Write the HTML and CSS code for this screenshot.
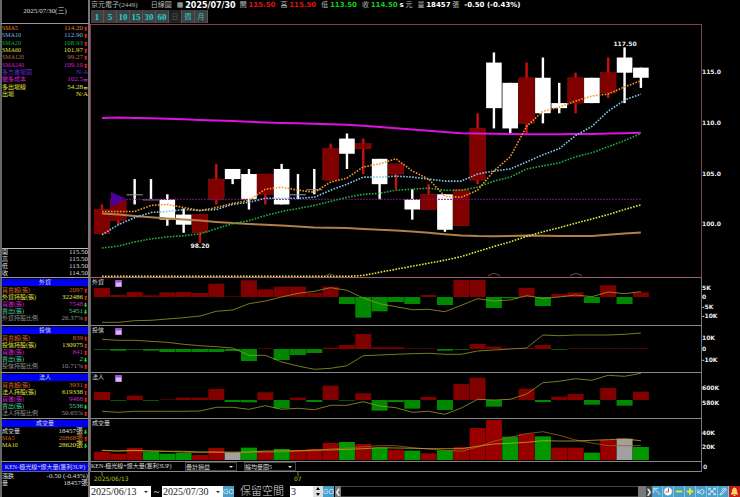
FILE: index.html
```html
<!DOCTYPE html>
<html lang="zh-Hant">
<head>
    <meta charset="UTF-8">
    <meta name="viewport" content="width=device-width, initial-scale=1.0">
    <title>京元電子(2449) 日線圖</title>
    <link rel="stylesheet" href="styles.css">
</head>
<body>

<div class="app">

    <div class="side top-date">2025/07/30(三)</div>
    <header class="head">
        <div class="quote">
            <span class="name">京元電子(2449)</span>
            <span class="kind">日線圖</span>
            <span class="box">▦</span>
            <b class="day">2025/07/30</b>
            <span class="f">開 <b class="up">115.50</b></span>
            <span class="f">高 <b class="up">115.50</b></span>
            <span class="f">低 <b class="down">113.50</b></span>
            <span class="f">收 <b class="down">114.50</b> <b>s</b> 元</span>
            <span class="f">量 <b>18457</b> 張</span>
            <b>-0.50 (-0.43%)</b>
        </div>
        <nav class="periods">
            <button>1</button><button>5</button><button>10</button><button>15</button><button>30</button><button>60</button><button class="on">日</button><button class="cjk">週</button><button class="cjk">月</button>
        </nav>
    </header>

    <div class="side main-side">
        <table class="averages">
            <tr class="orange"><th>SMA5</th><td>114.20</td><td class="ar r">⬆</td></tr>
            <tr class="blue"><th>SMA10</th><td>112.90</td><td class="ar r">⬆</td></tr>
            <tr class="green"><th>SMA20</th><td>108.93</td><td class="ar r">⬆</td></tr>
            <tr class="yellow"><th>SMA60</th><td>101.97</td><td class="ar r">⬆</td></tr>
            <tr class="brown"><th>SMA120</th><td>99.27</td><td class="ar r">⬆</td></tr>
            <tr class="magenta"><th>SMA240</th><td>109.10</td><td class="ar r">⬆</td></tr>
            <tr class="violet"><th>多方進場圖</th><td colspan="2">N/A</td></tr>
            <tr class="magenta"><th>做多成本</th><td>102.5</td><td class="ar">=</td></tr>
            <tr class="yellow"><th>多出場線</th><td>54.28</td><td class="ar">=</td></tr>
            <tr class="yellow"><th>出場</th><td colspan="2">N/A</td></tr>
        </table>
        <table class="ohlc">
            <tr><th>開</th><td>115.50</td></tr>
            <tr><th>高</th><td>115.50</td></tr>
            <tr><th>低</th><td>113.50</td></tr>
            <tr><th>收</th><td>114.50</td></tr>
        </table>
    </div>
    <div class="plot main"><svg id="price"></svg></div>
    <div class="axis"><svg id="price-axis"></svg></div>

    <div class="side">
        <h2>外資</h2>
        <table>
            <tr class="rust"><th>買賣超(張)</th><td>2097</td><td class="ar r">⬆</td></tr>
            <tr class="yellow"><th>外資持股(張)</th><td>322486</td><td class="ar r">⬆</td></tr>
            <tr class="magenta"><th>買進(張)</th><td>7548</td><td class="ar g">⬇</td></tr>
            <tr class="mint"><th>賣出(張)</th><td>5451</td><td class="ar g">⬇</td></tr>
            <tr class="gray"><th>外資持股比例</th><td>26.37%</td><td class="ar r">⬆</td></tr>
        </table>
    </div>
    <div class="plot"><span class="title">外資</span><span class="tag">▤</span><svg id="foreign"></svg></div>
    <div class="axis"><svg id="foreign-axis"></svg></div>

    <div class="side">
        <h2>投信</h2>
        <table>
            <tr class="rust"><th>買賣超(張)</th><td>839</td><td class="ar r">⬆</td></tr>
            <tr class="yellow"><th>投信持股(張)</th><td>130975</td><td class="ar r">⬆</td></tr>
            <tr class="magenta"><th>買進(張)</th><td>841</td><td class="ar r">⬆</td></tr>
            <tr class="mint"><th>賣出(張)</th><td>2</td><td class="ar g">⬇</td></tr>
            <tr class="gray"><th>投信持股比例</th><td>10.71%</td><td class="ar r">⬆</td></tr>
        </table>
    </div>
    <div class="plot"><span class="title">投信</span><span class="tag">▤</span><svg id="trust"></svg></div>
    <div class="axis"><svg id="trust-axis"></svg></div>

    <div class="side">
        <h2>法人</h2>
        <table>
            <tr class="rust"><th>買賣超(張)</th><td>3931</td><td class="ar r">⬆</td></tr>
            <tr class="yellow"><th>法人持股(張)</th><td>619338</td><td class="ar r">⬆</td></tr>
            <tr class="magenta"><th>買進(張)</th><td>9468</td><td class="ar r">⬆</td></tr>
            <tr class="mint"><th>賣出(張)</th><td>5536</td><td class="ar g">⬇</td></tr>
            <tr class="gray"><th>法人持股比例</th><td>50.65%</td><td class="ar r">⬆</td></tr>
        </table>
    </div>
    <div class="plot"><span class="title">法人</span><span class="tag">▤</span><svg id="legal"></svg></div>
    <div class="axis"><svg id="legal-axis"></svg></div>

    <div class="side">
        <h2>成交量</h2>
        <table>
            <tr><th>成交量</th><td>18457張</td><td class="ar g">⬇</td></tr>
            <tr class="rust"><th>MA5</th><td>20868張</td><td class="ar r">⬆</td></tr>
            <tr class="yellow"><th>MA10</th><td>28620張</td><td class="ar g">⬇</td></tr>
        </table>
    </div>
    <div class="plot"><span class="title">成交量</span><svg id="volume"></svg></div>
    <div class="axis"><svg id="volume-axis"></svg></div>

    <div class="side ken"><h2>KEN-極光線+爆大量(獲利3UP)</h2></div>
    <div class="plot strategy">
        <span class="label">KEN-極光線+爆大量(獲利3UP)</span>
        <span class="drop dark"><select aria-label="損益"><option>疊計損益</option></select></span>
        <span class="drop dark"><select aria-label="量圖"><option>縮均量圖5</option></select></span>
    </div>
    <div class="axis"><span class="zero">0</span></div>

    <div class="side change">
        <table>
            <tr><th>漲跌</th><td>-0.50 (-0.43%)</td></tr>
            <tr><th>量</th><td>18457張</td></tr>
        </table>
    </div>
    <div class="times"><svg id="times"></svg></div>

    <form class="toolbar">
        <span class="drop date"><select aria-label="開始日期"><option>2025/06/13</option></select></span>
        <span class="tilde">~</span>
        <span class="drop date"><select aria-label="結束日期"><option>2025/07/30</option></select></span>
        <button type="button" class="go">GO</button>
        <label for="space">保留空間</label>
        <span class="spin"><input id="space" type="text" value="3"><svg viewBox="0 0 10 11"><path d="M5 1L7 4H3zM5 10L7 7H3z"/></svg></span>
        <button type="button" class="go">GO</button>
        <span class="scroll"><button type="button" aria-label="左">❮</button><i></i><em></em><button type="button" class="dk" aria-label="右">❯</button></span>
        <span class="icons">
            <button type="button" aria-label="游標"><svg viewBox="0 0 11 11"><path d="M9 9L3 3M2 7V2H7"/></svg></button>
            <button type="button" aria-label="時間"><svg viewBox="0 0 11 11"><circle cx="5.500" cy="5.500" r="4" fill="#fff"/><path d="M6 2V6H3" stroke="#d33"/></svg></button>
            <button type="button" aria-label="縮小"><svg viewBox="0 0 11 11"><path class="y" d="M2 5.500H9"/></svg></button>
            <button type="button" aria-label="放大"><svg viewBox="0 0 11 11"><path class="y" d="M2 5.500H9M5.500 2V9"/></svg></button>
            <button type="button" aria-label="復原"><svg viewBox="0 0 11 11"><path d="M2 3V7H6M2 7L5 4Q8 2 9 5Q9 8 6 9"/></svg></button>
            <button type="button" aria-label="全螢幕"><svg viewBox="0 0 11 11"><path d="M2 2L9 9M9 2L2 9M2 4V2H4M7 2H9V4M2 7V9H4M7 9H9V7M4 5.500H7"/></svg></button>
            <button type="button" aria-label="畫線"><svg viewBox="0 0 11 11"><path d="M2 9L8 2L9 4L4 9zM4 4L7 1"/></svg></button>
            <button type="button" class="bell" aria-label="警示"><svg viewBox="0 0 11 11"><path d="M1.500 8.500Q3 7 3 5Q3 2 5.500 1.500Q8 2 8 5Q8 7 9.500 8.500zM4.500 9H6.500V10H4.500z"/></svg></button>
        </span>
    </form>
</div>

<script src="script.js"></script>
</body>
</html>
```

FILE: styles.css
```css
* {
    box-sizing: border-box;
}
body {
    margin: 0;
    background: #000;
    color: #ddd;
    font-family: "Liberation Serif", "Noto Sans CJK TC", serif;
    font-size: 7px;
    line-height: 7px;
}
button, input, select {
    margin: 0;
    padding: 0;
    border: 0;
    border-radius: 0;
    font-family: inherit;
}
svg {
    display: block;
}

.app {
    display: grid;
    grid-template-columns: 90px 1fr 38px;
    grid-template-rows: 24px 254px 48px 47px 46px 43px 10px 14px 11px;
}

/* left column */
.side {
    border-left: 2px solid #666;
    border-right: 2px solid #777;
    border-bottom: 1px solid #999;
    overflow: hidden;
}
.top-date {
    display: flex;
    align-items: center;
    justify-content: center;
}
.side h2 {
    margin: 1px 0 0;
    height: 7px;
    background: #0000f0;
    color: #ddd;
    font-size: 6px;
    line-height: 7px;
    font-weight: normal;
    text-align: center;
    white-space: nowrap;
}
.side table {
    width: 100%;
    border-collapse: collapse;
    margin-top: 1px;
}
.side .averages {
    height: 73px;
}
.side tr {
    height: 7px;
}
.side th, .side td {
    padding: 0;
    font-weight: normal;
    line-height: 7px;
    white-space: nowrap;
}
.side th {
    text-align: left;
    font-size: 6px;
}
.side td {
    text-align: right;
}
.side .ar {
    width: 5px;
    font-family: "DejaVu Sans", sans-serif;
    font-size: 6px;
    font-weight: bold;
}
.main-side {
    display: flex;
    flex-direction: column;
    justify-content: space-between;
}
.side .ohlc {
    border-top: 1px solid #bbb;
}
.side.ken {
    border-bottom-color: #666;
}
.ken h2 {
    height: 8px;
    line-height: 8px;
}
.change {
    grid-row: span 2;
    border-bottom: 0;
}

.orange { color: #e88420; }
.blue { color: #70b8e0; }
.green { color: #00b048; }
.yellow { color: #e0e040; }
.brown { color: #b07044; }
.magenta { color: #d020d0; }
.violet { color: #6428d8; }
.rust { color: #d06424; }
.mint { color: #50d090; }
.gray { color: #909090; }
.side .r { color: #e82020; }
.side .g { color: #20d030; }

/* quote line */
.head {
    grid-column: span 2;
    font-size: 7px;
}
.quote {
    display: flex;
    height: 10px;
    align-items: center;
    padding-left: 1px;
    white-space: nowrap;
    color: #bbb;
}
.quote b {
    font-family: "DejaVu Sans", sans-serif;
    font-size: 7px;
    color: #fff;
}
.quote .kind {
    margin-left: 13px;
}
.quote .box {
    margin: 0 2px 0 5px;
    font-family: "DejaVu Sans", sans-serif;
}
.quote .day {
    font-size: 8px;
    margin-right: 4px;
}
.quote .f {
    margin-right: 5px;
}
.quote .up { color: #e01010; }
.quote .down { color: #10d010; }
.periods {
    display: flex;
    padding-left: 1px;
}
.periods button {
    width: 13px;
    height: 13px;
    background: #404040;
    border-right: 1px solid #555;
    color: #20d0d0;
    font-size: 9px;
    line-height: 12px;
    font-weight: bold;
}
.periods .cjk {
    font-size: 7px;
    font-weight: normal;
}
.periods .on {
    color: #555;
    background: #222;
    font-size: 7px;
    font-weight: normal;
}

/* plots */
.plot {
    position: relative;
    border-left: 1px solid #666;
    border-right: 1px solid #777;
    border-bottom: 1px solid #888;
    overflow: hidden;
}
.plot.main {
    border-color: #804050;
    border-top: 1px solid #804050;
    border-bottom-color: #a06070;
}
.plot svg, .axis svg, .times svg {
    width: 100%;
    height: 100%;
}
.plot .title {
    position: absolute;
    left: 1px;
    top: 1px;
    font-size: 6px;
}
.plot .tag {
    position: absolute;
    left: 24px;
    top: 2px;
    width: 7px;
    height: 7px;
    background: #a050d8;
    color: #fff;
    font-family: "DejaVu Sans", sans-serif;
    font-size: 6px;
    text-align: center;
}
.axis {
    overflow: hidden;
}
text, .zero {
    font-family: "DejaVu Sans", sans-serif;
    font-size: 6px;
    font-weight: bold;
    fill: #eee;
}
.zero {
    display: block;
    padding: 1px;
}

.strategy {
    display: flex;
    align-items: center;
}
.strategy .label {
    width: 94px;
    font-size: 6px;
    white-space: nowrap;
}
.drop {
    position: relative;
    display: flex;
}
.drop select {
    appearance: none;
    width: 100%;
    color: inherit;
    background: transparent;
    font-size: inherit;
}
.drop::after {
    content: "";
    position: absolute;
    right: 3px;
    top: 3px;
    border: 2px solid transparent;
    border-top: 2px solid currentColor;
    border-bottom: 0;
    pointer-events: none;
}
.dark {
    width: 52px;
    height: 9px;
    margin-right: 7px;
    border: 1px solid #444;
    color: #ddd;
    font-size: 6px;
}

.times {
    grid-column: span 2;
}
.times text {
    fill: #b8c010;
    font-weight: normal;
}

/* bottom bar */
.toolbar {
    grid-column: 2 / span 2;
    display: flex;
    align-items: stretch;
    margin: 0;
    height: 11px;
    font-size: 10px;
    line-height: 11px;
}
.date {
    width: 61px;
    padding-left: 1px;
    background: #fff;
    color: #222;
}
.date::after {
    top: 5px;
}
.tilde {
    width: 11px;
    text-align: center;
    color: #fff;
}
.go {
    width: 11px;
    background: #4a9fc8;
    color: #d8f0ff;
    font-family: "Liberation Sans", sans-serif;
    font-size: 7px;
    line-height: 11px;
}
.toolbar label {
    width: 56px;
    padding-left: 6px;
    font-family: "Noto Sans CJK TC", sans-serif;
    font-weight: 300;
    font-size: 11px;
    line-height: 9px;
    white-space: nowrap;
}
.spin {
    display: flex;
    width: 33px;
    padding-left: 1px;
    background: #fff;
}
.spin input {
    flex: 1;
    min-width: 0;
    font-size: 10px;
    color: #222;
}
.spin svg {
    width: 10px;
    height: 11px;
    background: #ddd;
}
.scroll {
    flex: 1;
    display: flex;
    margin-left: 1px;
}
.scroll button {
    width: 6px;
    background: #777;
    color: #fff;
    font-size: 7px;
}
.scroll i {
    flex: 1;
    border-top: 1px solid #444;
    border-bottom: 1px solid #444;
}
.scroll em {
    width: 8px;
    background: #777;
}
.scroll .dk {
    background: #444;
}
.icons {
    display: flex;
}
.icons button {
    width: 11px;
    background: #4a9fc8;
    border-right: 1px solid #88c4dc;
}
.icons svg {
    width: 100%;
    height: 11px;
    fill: none;
    stroke: #e0f4ff;
}
.icons .y {
    stroke: #f0e820;
    stroke-width: 2;
}
.icons .bell {
    background: #c81818;
    border-right: 0;
}
.bell svg {
    fill: #ffd860;
    stroke: none;
}
```

FILE: script.js
```js
const STEP = 16.33;
const X0 = 11;
const RED = "#800000", GREEN = "#008800";

const x = i => X0 + STEP * i;
const priceY = p => 47.7 + (115 - p) * 10.133;

// top of body, bottom of body, high, low, colour (r / w / d = doji)
const candles = [
    [101.5, 99.1, 102, 99.1, "r"], [102.5, 100.4, 102.5, 100, "r"], [103, 103, 104.5, 102, "d"],
    [102.5, 102.5, 104.5, 102.5, "d"], [102.5, 100.5, 103, 99.9, "w"], [101, 100, 101.6, 99.2, "w"],
    [101, 99.2, 101, 98.2, "r"], [104.5, 102.5, 106, 102, "r"], [105.5, 104.5, 105.5, 104, "w"],
    [105, 102.5, 105.5, 101.5, "w"], [105, 103, 105, 102, "r"], [105.5, 102, 106, 102, "w"],
    [103, 103, 105, 102.5, "d"], [103.5, 103.5, 105.5, 103, "d"], [107.5, 104.4, 108, 104.4, "r"],
    [108.5, 107, 109, 105.5, "w"], [108, 107.5, 108.5, 105, "r"], [106.5, 104, 106.5, 102.5, "w"],
    [106, 105, 106, 103.5, "r"], [102.5, 101.5, 103.5, 100.5, "w"], [103, 101.5, 104, 101.5, "r"],
    [103, 99.5, 103, 99.3, "w"], [103.5, 99.9, 103.5, 99.9, "r"], [109.5, 104.4, 111, 104, "r"],
    [116, 111.5, 117, 109.5, "w"], [114, 109.5, 114, 109, "w"], [114.5, 110, 116, 109, "r"],
    [114.5, 111, 116.5, 110, "w"], [112, 111.5, 114, 111, "w"], [114.5, 112, 115, 111, "r"],
    [114.5, 112, 114.5, 112, "w"], [115, 113, 116.5, 112.5, "r"], [116.5, 115, 117.5, 112, "w"],
    [115.5, 114.5, 115.5, 113.5, "w"]
];

const sma5 = [101.3, 101.3, 101.3, 101.9, 102, 101.7, 101.4, 101.7, 102.1, 102.4, 103.5, 103.7, 103.4, 103.2, 104.2, 104.6, 105.7, 106, 106.5, 105.3, 104.5, 102.8, 102.7, 103.4, 105.3, 106.7, 109.7, 111.2, 111.6, 112.2, 112.7, 112.9, 113.6, 114.2];
const sma10 = [99, 100, 100.7, 101.2, 101.3, 101.5, 101.4, 101.5, 102, 102.2, 102.6, 102.6, 102.6, 102.7, 103.4, 104, 104.7, 104.7, 104.8, 104.7, 104.5, 104.3, 104.3, 105, 105.3, 105.5, 106.2, 106.9, 107.5, 108.8, 109.7, 111.2, 112.3, 112.9];
const sma20 = [97.7, 97.9, 98.3, 98.6, 98.8, 98.9, 99.1, 99.6, 100.1, 100.4, 100.9, 101.3, 101.6, 101.9, 102.3, 102.7, 103, 103.1, 103.4, 103.5, 103.6, 103.4, 103.4, 103.7, 104.3, 104.7, 105.5, 105.8, 106.1, 106.7, 107.1, 107.7, 108.3, 109];
const sma60 = [94.9, 94.9, 94.9, 94.9, 94.9, 94.9, 94.9, 94.9, 94.9, 94.9, 94.9, 94.9, 94.9, 94.9, 94.9, 94.9, 95, 95.3, 95.6, 95.9, 96.2, 96.5, 96.85, 97.35, 97.85, 98.3, 98.85, 99.3, 99.7, 100.15, 100.57, 101, 101.5, 101.95];
const sma120 = [101.1, 101, 100.86, 100.73, 100.6, 100.5, 100.4, 100.28, 100.16, 100.08, 100, 99.92, 99.82, 99.72, 99.7, 99.66, 99.58, 99.5, 99.44, 99.33, 99.2, 99.05, 98.92, 98.87, 98.86, 98.88, 98.92, 98.9, 98.87, 98.87, 98.88, 99, 99.12, 99.24];
const sma240 = [110.53, 110.57, 110.54, 110.5, 110.46, 110.4, 110.34, 110.28, 110.22, 110.15, 110.1, 110.05, 110.01, 109.96, 109.91, 109.86, 109.76, 109.64, 109.52, 109.4, 109.28, 109.14, 109.03, 108.99, 108.97, 108.95, 108.92, 108.92, 108.92, 108.94, 108.96, 109, 109.03, 109.08];

function rect(cx, y, w, h, fill, extra = "") {
    return `<rect x="${cx - w / 2}" y="${y}" width="${w}" height="${h}" fill="${fill}" ${extra}/>`;
}

function line(values, fy, color, width, dash = "") {
    const pts = values.map((v, i) => `${x(i).toFixed(1)},${fy(v).toFixed(1)}`).join(" ");
    return `<polyline points="${pts}" fill="none" stroke="${color}" stroke-width="${width}" stroke-dasharray="${dash}"/>`;
}

function drawPrice() {
    let out = "";
    candles.forEach(([top, bottom, high, low, c], i) => {
        const wick = c === "r" ? "#c81010" : "#fff";
        out += rect(x(i), priceY(high), 2.4, (high - low) * 10.133, wick);
        if (c === "d") {
            out += rect(x(i), priceY(top), 16, 1, "#999");
        } else {
            out += rect(x(i), priceY(top), 15.6, (top - bottom) * 10.133, c === "r" ? RED : "#fff", c === "r" ? 'stroke="#a01010" stroke-width="0.5"' : "");
        }
    });
    out += `<path d="M20 166.700L35.500 174L20 182z" fill="#4b0099"/>`;
    out += `<path d="M35 174.300H550" stroke="#781078" stroke-dasharray="2 1"/>`;
    out += line(sma240, priceY, "#e010e0", 2);
    out += line(sma120, priceY, "#b08048", 2);
    out += line(sma60, priceY, "#e8e840", 1.6, "1.600 1.400");
    out += line(sma20, priceY, "#20b040", 1.6, "1.600 1.400");
    out += line(sma10, priceY, "#80c8f0", 1.6, "1.600 1.400");
    out += line(sma5, priceY, "#f09828", 1.6, "1.600 1.400");
    out += `<path d="M235 251Q239 247 244 251M397 251Q403 246 409 251M479 251Q485 246 491 251" fill="none" stroke="#665544"/>`;
    out += `<text x="109" y="223" text-anchor="middle">98.20</text>`;
    out += `<text x="534" y="21" text-anchor="middle">117.50</text>`;
    document.getElementById("price").innerHTML = out;
}

function drawAxis(id, ticks) {
    document.getElementById(id).innerHTML = ticks.map(([label, y]) => `<text x="0" y="${y}">${label}</text>`).join("");
}

// bar heights and line levels are kept in thirds of a pixel
function drawPane(id, zero, bars, lines, shift, colors) {
    let out = "";
    bars.forEach((v, i) => {
        const h = Math.max(Math.abs(v) / 3, 0.6);
        let fill = v > 0 ? RED : GREEN;
        if (colors) {
            fill = { r: "#980000", g: "#009800", w: "#a0a0a0" }[colors[i]];
        }
        out += rect(x(i), v > 0 ? zero - h : zero, 16, h, fill);
    });
    lines.forEach(([values, color]) => {
        out += line(values, v => v / 3 - shift, color, 0.8);
    });
    document.getElementById(id).innerHTML = out;
}

drawPrice();
drawAxis("price-axis", [["115.0", 50], ["110.0", 101], ["105.0", 152], ["100.0", 202]]);

drawPane("foreign", 19,
    [27, 6, 15, 5, 14, 15, 12, 40, 1, 50, 23, 31, 31, 12, 31, -21, -62, -43, -15, -21, 6, -24, 51, 51, -33, -4, 27, -27, 9, 14, -18, 35, -21, 14],
    [[[142, 142, 137, 136, 132, 128, 123, 109, 105, 86, 78, 66, 55, 49, 38, 46, 69, 86, 95, 104, 103, 110, 91, 71, 78, 75, 62, 70, 66, 60, 65, 51, 56, 50], "#98982a"]], 3);
drawAxis("foreign-axis", [["5K", 12], ["0", 21], ["-5K", 31], ["-10K", 40]]);

drawPane("trust", 23,
    [-2, -5, -2, -5, -9, -9, -9, -9, -6, -36, 1, -33, -18, -12, 4, 12, 45, 5, 5, 1, 1, -5, -2, 15, 7, 1, 3, 12, -2, 1, 1, 1, 1, 1],
    [[[193, 196, 196, 199, 202, 208, 212, 215, 219, 241, 241, 261, 273, 283, 280, 272, 242, 240, 238, 236, 235, 238, 238, 228, 225, 222, 219, 180, 182, 180, 180, 180, 178, 174], "#98982a"]], 51);
drawAxis("trust-axis", [["10K", 14], ["0", 25], ["-10K", 36]]);

drawPane("legal", 27,
    [24, -2, 13, -2, 1, 7, 7, 33, -6, -7, 23, -25, 7, -6, 43, -1, 20, -32, -6, -26, 9, -30, 48, 67, -20, 1, 34, -6, 10, 18, -14, 36, -17, 25],
    [[[124, 127, 124, 124, 124, 124, 123, 112, 112, 118, 107, 118, 115, 119, 106, 106, 95, 108, 113, 127, 124, 133, 114, 88, 90, 88, 72, 38, 34, 26, 31, 16, 19, 10], "#98982a"]], 3);
drawAxis("legal-axis", [["600K", 17], ["580K", 32]]);

drawPane("volume", 41,
    [25, 19, 36, 25, 19, 21, 15, 36, 22, 37, 27, 33, 30, 33, 51, 54, 48, 37, 31, 28, 20, 29, 39, 96, 120, 70, 79, 71, 37, 37, 22, 60, 64, 39],
    [
        [[241, 243, 242, 243, 244, 247, 247, 247, 247, 247, 247, 246, 243, 242, 237, 234, 230, 227, 227, 233, 237, 241, 244, 231, 214, 202, 191, 185, 196, 210, 219, 227, 227, 227], "#a06020"],
        [[241, 243, 241, 243, 244, 244, 246, 246, 247, 246, 243, 243, 242, 240, 240, 238, 236, 233, 234, 235, 236, 236, 236, 229, 222, 220, 217, 212, 213, 213, 211, 209, 207, 212], "#c0a820"]
    ], 49, "rrrgggrrwgrgrrrgrgrgrgrrrgrgrrgrwg");
drawAxis("volume-axis", [["40K", 16], ["20K", 30]]);

document.getElementById("times").innerHTML =
    `<path d="M12 0V4M208 0V4" stroke="#888820"/><text x="4" y="9">2025/06/13</text><text x="204" y="9">07</text>`;
```
